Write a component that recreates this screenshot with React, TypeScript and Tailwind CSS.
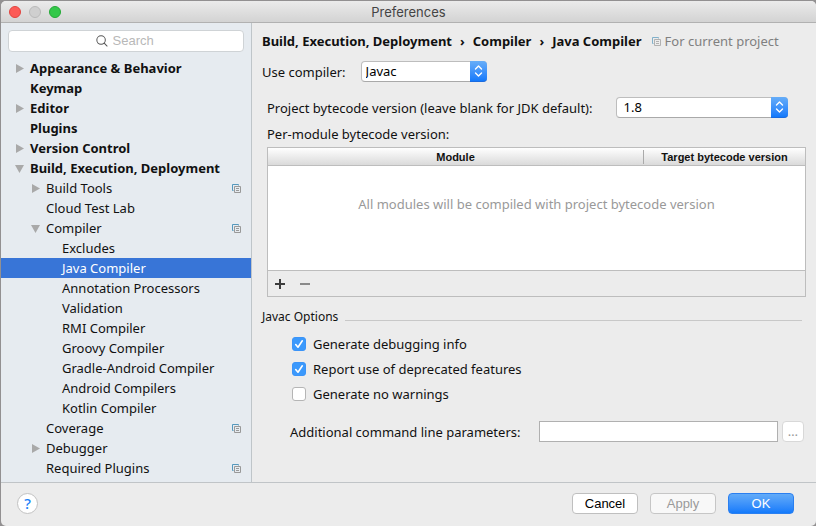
import type { ReactNode } from "react";

type Item = {
  label: string;
  level: 0 | 1 | 2;
  arrow?: "right" | "down";
  bold?: boolean;
  project?: boolean;
  selected?: boolean;
};

const items: Item[] = [
  { label: "Appearance & Behavior", level: 0, arrow: "right", bold: true },
  { label: "Keymap", level: 0, bold: true },
  { label: "Editor", level: 0, arrow: "right", bold: true },
  { label: "Plugins", level: 0, bold: true },
  { label: "Version Control", level: 0, arrow: "right", bold: true },
  { label: "Build, Execution, Deployment", level: 0, arrow: "down", bold: true },
  { label: "Build Tools", level: 1, arrow: "right", project: true },
  { label: "Cloud Test Lab", level: 1 },
  { label: "Compiler", level: 1, arrow: "down", project: true },
  { label: "Excludes", level: 2 },
  { label: "Java Compiler", level: 2, selected: true },
  { label: "Annotation Processors", level: 2 },
  { label: "Validation", level: 2 },
  { label: "RMI Compiler", level: 2 },
  { label: "Groovy Compiler", level: 2 },
  { label: "Gradle-Android Compiler", level: 2 },
  { label: "Android Compilers", level: 2 },
  { label: "Kotlin Compiler", level: 2 },
  { label: "Coverage", level: 1, project: true },
  { label: "Debugger", level: 1, arrow: "right" },
  { label: "Required Plugins", level: 1, project: true },
];

const indent = { 0: "pl-[14px]", 1: "pl-[30px]", 2: "pl-[46px]" };

function ProjectIcon({ className = "" }: { className?: string }) {
  return (
    <svg width="9" height="9" viewBox="0 0 9 9" fill="none" className={`shrink-0 ${className}`} aria-hidden="true">
      <path d="M1.5 6.5H0.5V0.5H6.5V1.5" stroke="#5598bd" />
      <path d="M2.5 2.5H8.5V8.5H2.5Z" stroke="#999" />
      <path d="M4 4.5H7M4 6.5H7" stroke="#999" />
    </svg>
  );
}

function Arrow({ dir }: { dir?: "right" | "down" }) {
  return (
    <svg width="9" height="9" viewBox="0 0 9 9" className="shrink-0" fill="#a9a9a9" aria-hidden="true">
      {dir === "right" && <path d="M1 0L9 4.5L1 9Z" />}
      {dir === "down" && <path d="M0 1H9L4.5 9Z" />}
    </svg>
  );
}

function Select({ id, className, inset, options }: { id: string; className: string; inset: string; options: string[] }) {
  return (
    <div className={`relative h-[21px] ${className}`}>
      <select
        id={id}
        className={`block h-full w-full appearance-none rounded-[4px] border border-[#bdbdbd] border-b-[#a9a9a9] bg-white pr-5 leading-[19px] text-black ${inset}`}
      >
        {options.map((o) => (
          <option key={o}>{o}</option>
        ))}
      </select>
      <span className="pointer-events-none absolute inset-y-0 right-0 flex w-[17px] items-center justify-center rounded-r-[4px] border-b border-[#1a6be0] bg-linear-to-b from-[#66adf8] to-[#1179fb]">
        <svg width="9" height="12" viewBox="0 0 9 12" fill="none" stroke="#fff" strokeWidth="1.4" strokeLinecap="round" strokeLinejoin="round" aria-hidden="true">
          <path d="M1.5 4L4.5 1L7.5 4M1.5 8L4.5 11L7.5 8" />
        </svg>
      </span>
    </div>
  );
}

function Check({ children, checked }: { children: ReactNode; checked?: boolean }) {
  return (
    <label className="flex h-[25px] items-center gap-[7px]">
      <span className="relative flex size-[14px]">
        <input
          type="checkbox"
          defaultChecked={checked}
          className="peer size-[14px] appearance-none rounded-[3px] border border-[#b5b5b5] bg-white checked:border-[#3b94f8] checked:bg-[#3b99fc]"
        />
        <svg viewBox="0 0 14 14" fill="none" stroke="#fff" strokeWidth="1.6" strokeLinecap="round" strokeLinejoin="round" className="pointer-events-none absolute inset-0 hidden size-[14px] peer-checked:block" aria-hidden="true">
          <path d="M3.7 7.5L6 10.2L10.3 3.8" />
        </svg>
      </span>
      {children}
    </label>
  );
}

const dialogButton = "h-[21px] w-[66px] rounded-[4px] border font-['Liberation_Sans',sans-serif] text-[13px] leading-[19px]";

export default function App() {
  return (
    <div className="flex min-h-screen flex-col bg-[#929091] pt-px pl-px font-['Noto_Sans',sans-serif] text-[13px] leading-[20px] text-[#111]">
      <div className="flex flex-1 flex-col overflow-hidden rounded-[5px] bg-[#ececec]">
        <header className="relative flex h-[22px] items-center justify-center border-b border-[#b1b1b1] bg-linear-to-b from-[#ebebeb] to-[#d3d3d3]">
          <div className="absolute left-2 flex gap-2">
            <button aria-label="Close" className="size-3 rounded-full border border-[#e0443e] bg-[#fc5b57]" />
            <button aria-label="Minimize" disabled className="size-3 rounded-full border border-[#b9b9b9] bg-[#cfcfcf]" />
            <button aria-label="Zoom" className="size-3 rounded-full border border-[#24a936] bg-[#34c84a]" />
          </div>
          <h1 className="font-['Inter',sans-serif] text-[13px] text-[#444]">Preferences</h1>
        </header>

        <div className="flex flex-1">
          <aside className="w-[251px] shrink-0 border-r border-[#bfc5c9] bg-[#e6ebf0] pt-[7px] pb-1">
            <div className="mx-[7px] flex h-[22px] items-center justify-center gap-[5px] rounded-[4px] border border-[#cfd3d6] bg-white">
              <svg width="12" height="12" viewBox="0 0 13 13" fill="none" stroke="#555" strokeWidth="1.1" strokeLinecap="round" aria-hidden="true">
                <circle cx="5.5" cy="5.5" r="4.6" />
                <path d="M8.9 8.9L12 12" />
              </svg>
              <input
                type="text"
                aria-label="Search"
                placeholder="Search"
                className="w-[44px] bg-transparent font-['Liberation_Sans',sans-serif] text-[13px] outline-none placeholder:text-[#b8b8b8]"
              />
            </div>
            <ul className="mt-[6px]">
              {items.map((it) => (
                <li
                  key={it.label}
                  className={`flex h-5 items-center pr-[10px] ${indent[it.level]} ${it.bold ? "font-bold" : ""} ${it.selected ? "bg-[#3875d7] text-white" : ""}`}
                >
                  <Arrow dir={it.arrow} />
                  <span className="ml-[6px] flex-1 whitespace-nowrap">{it.label}</span>
                  {it.project && <ProjectIcon />}
                </li>
              ))}
            </ul>
          </aside>

          <main className="min-w-0 flex-1 px-[10px] pt-2">
            <div className="flex h-5 items-center whitespace-nowrap">
              <h2 className="flex gap-2 font-bold">
                <span>Build, Execution, Deployment</span>
                <span>›</span>
                <span>Compiler</span>
                <span>›</span>
                <span>Java Compiler</span>
              </h2>
              <ProjectIcon className="ml-[10px] opacity-70" />
              <span className="ml-1 text-[#808080]">For current project</span>
            </div>

            <div className="mt-[10px] flex items-center gap-[15px]">
              <label htmlFor="compiler">Use compiler:</label>
              <Select id="compiler" className="w-[126px]" inset="pl-1" options={["Javac", "Eclipse", "Ajc"]} />
            </div>

            <div className="mt-[15px] flex items-center gap-[23px] pr-[18px] pl-[5px]">
              <label htmlFor="bytecode" className="whitespace-nowrap">
                Project bytecode version (leave blank for JDK default):
              </label>
              <Select id="bytecode" className="flex-1" inset="pl-[7px]" options={["1.8", "1.7", "1.6"]} />
            </div>

            <section className="mt-[6px] pl-[5px]">
              <h3>Per-module bytecode version:</h3>
              <div className="mt-[3px] border border-[#bdbdbd] bg-white">
                <table className="w-full table-fixed border-separate border-spacing-0">
                  <thead className="bg-linear-to-b from-white to-[#d8d8d8] font-['Liberation_Sans',sans-serif] text-[11px] leading-[14px]">
                    <tr>
                      <th className="border-b border-[#bdbdbd] px-0 pt-[2px] pb-px">
                        <span className="block h-[14px] border-r border-[#aaa]">Module</span>
                      </th>
                      <th className="w-[161px] border-b border-[#bdbdbd] px-0 pt-[2px] pb-px">Target bytecode version</th>
                    </tr>
                  </thead>
                  <tbody>
                    <tr>
                      <td colSpan={2} className="h-[104px] px-0 pt-[28px] pb-0 text-center align-top text-[#999]">
                        All modules will be compiled with project bytecode version
                      </td>
                    </tr>
                  </tbody>
                </table>
                <div className="flex h-[26px] items-center gap-[15px] border-t border-[#bdbdbd] bg-[#ececec] pl-[7px]">
                  <button aria-label="Add module">
                    <svg width="10" height="10" viewBox="0 0 10 10" stroke="#3c3c3c" strokeWidth="2">
                      <path d="M5 0V10M0 5H10" />
                    </svg>
                  </button>
                  <button aria-label="Remove module">
                    <svg width="10" height="10" viewBox="0 0 10 10" stroke="#8a8a8a" strokeWidth="2">
                      <path d="M0 5H10" />
                    </svg>
                  </button>
                </div>
              </div>
            </section>

            <section className="mt-[10px]">
              <div className="flex items-center gap-[7px] pr-[4px]">
                <h3 className="text-[12px]">Javac Options</h3>
                <div className="mt-[7px] h-px flex-1 bg-[#c8c8c8]" />
              </div>
              <div className="mt-[4px] flex flex-col items-start pl-[30px]">
                <Check checked>Generate debugging info</Check>
                <Check checked>Report use of deprecated features</Check>
                <Check>Generate no warnings</Check>
              </div>
              <div className="mt-[15px] flex items-center pr-[2px] pl-[28px]">
                <label htmlFor="params" className="whitespace-nowrap">Additional command line parameters:</label>
                <input id="params" type="text" className="ml-[19px] h-[21px] min-w-0 flex-1 border border-[#b0b0b0] bg-white px-1" />
                <button aria-label="Expand parameters" className="ml-1 h-[21px] w-[22px] rounded-[4px] border border-[#d8d8d8] bg-white leading-[19px] text-[#999]">
                  …
                </button>
              </div>
            </section>
          </main>
        </div>

        <footer className="flex h-[44px] items-center border-t border-[#c0c4c7] pr-[22px] pb-[2px] pl-4">
          <button aria-label="Help" className="size-[21px] rounded-full border border-[#c2c2c2] bg-white text-[15px] leading-[19px] font-medium text-[#1b82f8]">
            ?
          </button>
          <div className="ml-auto flex gap-3">
            <button className={`${dialogButton} border-[#bfbfbf] bg-white text-black`}>Cancel</button>
            <button disabled className={`${dialogButton} border-[#c6c6c6] bg-[#f8f8f8] text-[#9a9a9a]`}>Apply</button>
            <button className={`${dialogButton} border-[#2a7ff0] bg-linear-to-b from-[#62abf8] to-[#117afb] text-white`}>OK</button>
          </div>
        </footer>
      </div>
    </div>
  );
}
